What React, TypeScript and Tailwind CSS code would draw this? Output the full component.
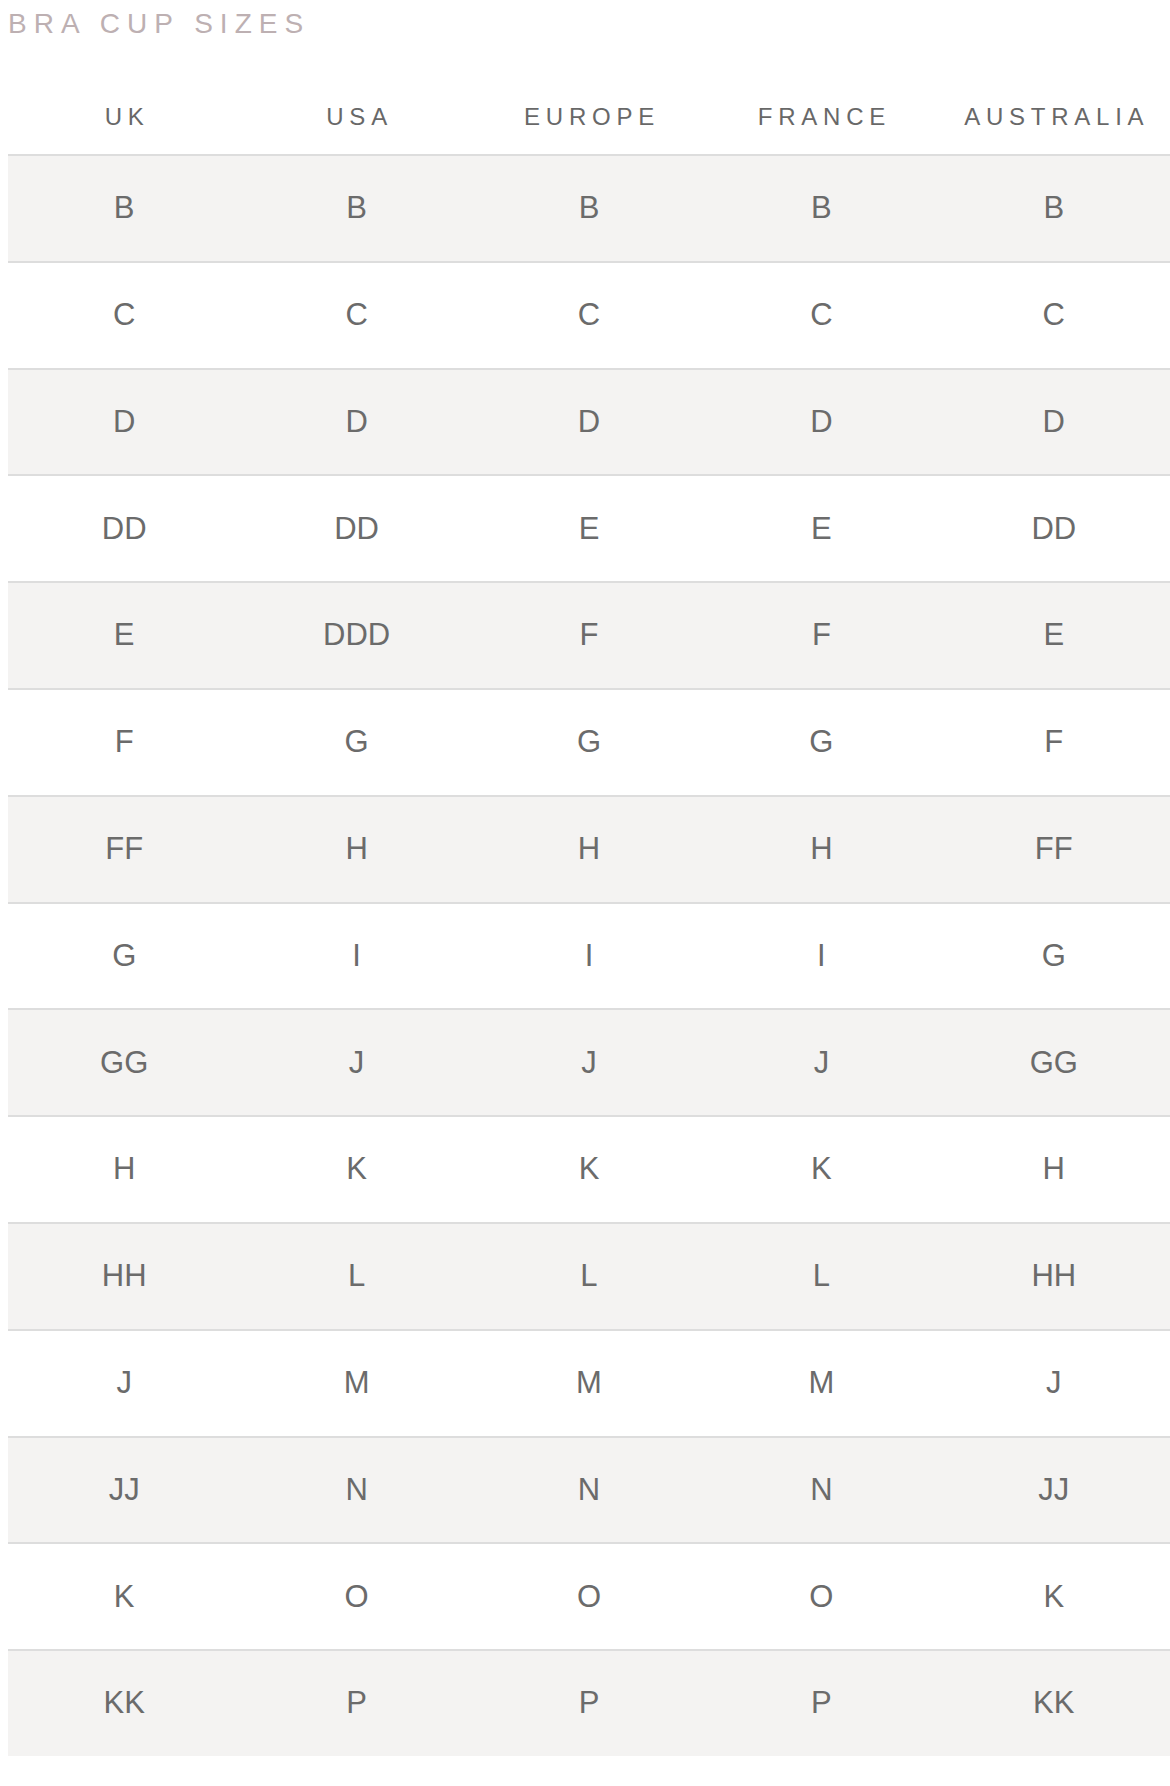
// Bra cup size conversion chart
const COLUMNS = ["UK", "USA", "EUROPE", "FRANCE", "AUSTRALIA"];

const ROWS: string[][] = [
  ["B", "B", "B", "B", "B"],
  ["C", "C", "C", "C", "C"],
  ["D", "D", "D", "D", "D"],
  ["DD", "DD", "E", "E", "DD"],
  ["E", "DDD", "F", "F", "E"],
  ["F", "G", "G", "G", "F"],
  ["FF", "H", "H", "H", "FF"],
  ["G", "I", "I", "I", "G"],
  ["GG", "J", "J", "J", "GG"],
  ["H", "K", "K", "K", "H"],
  ["HH", "L", "L", "L", "HH"],
  ["J", "M", "M", "M", "J"],
  ["JJ", "N", "N", "N", "JJ"],
  ["K", "O", "O", "O", "K"],
  ["KK", "P", "P", "P", "KK"],
];

export default function App() {
  return (
    <div
      className="w-full bg-white pl-2"
      style={{ fontFamily: '"Liberation Sans", Arial, sans-serif' }}
    >
      {/* Title */}
      <div className="h-[80px] pt-[10px]">
        <h2 className="text-[28px] leading-none tracking-[0.25em] text-[#bdb0b2] font-normal">
          BRA CUP SIZES
        </h2>
      </div>

      {/* Header */}
      <div className="grid grid-cols-5 h-[74px]">
        {COLUMNS.map((c) => (
          <div
            key={c}
            className="flex items-center justify-center pl-[6px] text-[24px] tracking-[0.24em] text-[#686868]"
          >
            {c}
          </div>
        ))}
      </div>

      {/* Body */}
      <div className="flex flex-col">
        {ROWS.map((row, i) => (
          <div
            key={i}
            className={`grid grid-cols-5 h-[106.8px] border-t-2 border-[#dddddd] ${
              i % 2 === 0 ? "bg-[#f4f3f2]" : "bg-white"
            }`}
          >
            {row.map((v, j) => (
              <div
                key={j}
                className="flex items-center justify-center text-[31px] text-[#6b6b6b]"
              >
                {v}
              </div>
            ))}
          </div>
        ))}
      </div>
    </div>
  );
}
